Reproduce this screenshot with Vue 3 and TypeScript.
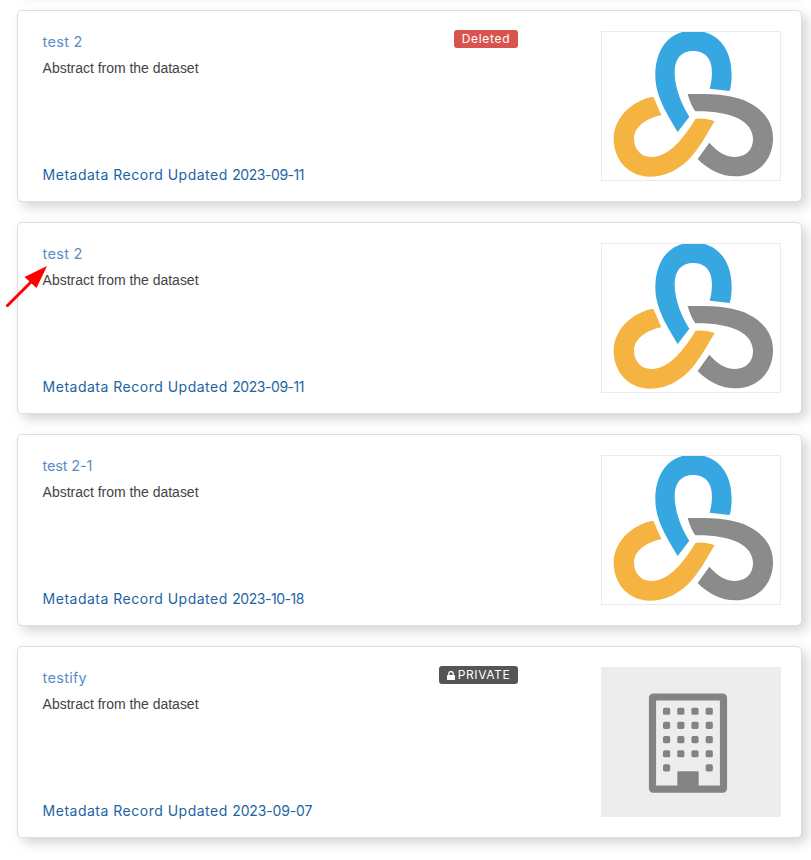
<script setup lang="ts">
interface Dataset {
  id: number
  title: string
  abstract: string
  updated: string
  status?: 'deleted' | 'private'
  image: 'logo' | 'building'
  pointed?: boolean
}

const abstract = 'Abstract from the dataset'

const datasets: Dataset[] = [
  { id: 1, title: 'test 2', abstract, updated: '2023-09-11', status: 'deleted', image: 'logo' },
  { id: 2, title: 'test 2', abstract, updated: '2023-09-11', image: 'logo', pointed: true },
  { id: 3, title: 'test 2-1', abstract, updated: '2023-10-18', image: 'logo' },
  { id: 4, title: 'testify', abstract, updated: '2023-09-07', status: 'private', image: 'building' },
]

const windows = [143, 185.5, 228, 270.5, 313].flatMap((y, row) =>
  [189, 231.7, 274.3, 317]
    .filter((_, col) => row < 4 || col === 0 || col === 3)
    .map((x) => ({ x, y })),
)

// Text holding the digit 1 is set tighter, as the digit is narrow.
const hasNarrowDigit = (text: string): boolean => text.includes('1')
</script>

<template>
  <main class="list">
    <article v-for="d in datasets" :key="d.id" class="card">
      <div class="info">
        <div class="heading">
          <a class="title" :class="{ narrow: hasNarrowDigit(d.title) }">{{ d.title }}</a>
          <span v-if="d.status === 'deleted'" class="badge deleted">Deleted</span>
          <span v-else-if="d.status === 'private'" class="badge private">
            <svg class="lock" viewBox="0 0 8 9">
              <path d="M1.8 4V2.7a2.2 2.2 0 0 1 4.4 0V4" fill="none" stroke="#fff" stroke-width="1.3" />
              <rect x="0" y="3.9" width="8" height="5.1" rx="0.6" fill="#fff" />
            </svg>
            <span>PRIVATE</span>
          </span>
        </div>
        <p class="abstract">{{ d.abstract }}</p>
        <p class="updated">
          Metadata Record Updated
          <time :class="{ narrow: hasNarrowDigit(d.updated) }">{{ d.updated }}</time>
        </p>
      </div>

      <div class="thumb" :class="d.image">
        <svg v-if="d.image === 'logo'" viewBox="3 18 540 450">
          <path
            fill="#36a7e0"
            d="M233 321C205 273 165 215 166 150C167 70 208 17 280 17C352 17 395 70 395 150C395 168 393 185 389 198L329 191C335 170 337 150 335 130C332 95 310 78 280 78C245 78 223 100 224 145C225 190 245 240 268 275Z"
          />
          <path
            fill="#8b8b8b"
            d="M263 207H310C380 208 427 218 461 241C501 267 520 301 519 342C518 405 475 453 405 454C365 454 325 435 293 402L328 353C350 378 375 396 405 396C440 396 460 372 459 340C456 290 400 258 286 259Q272 240 263 207Z"
          />
          <path
            fill="#f5b342"
            d="M160 215L184 271C140 280 101 305 102 343C103 375 125 396 152 396C195 396 235 365 287 281Q315 279 344 288C300 365 280 392 255 414C220 442 190 455 150 455C85 455 42 405 41 343C41 275 100 225 160 215Z"
          />
        </svg>
        <svg v-else viewBox="3 21 540 450">
          <rect x="157.5" y="111" width="213" height="276.5" rx="2" fill="none" stroke="#838383" stroke-width="21.5" stroke-linejoin="round" />
          <path d="M232 388V338q0-4 4-4h56q4 0 4 4v50z" fill="#838383" />
          <rect v-for="w in windows" :key="`${w.x}-${w.y}`" :x="w.x" :y="w.y" width="21.5" height="21.5" rx="5" fill="#838383" />
        </svg>
      </div>

      <svg v-if="d.pointed" class="arrow" viewBox="0 0 42 42">
        <path d="M1.5 39.5L28 13" stroke="#f00" stroke-width="3" stroke-linecap="round" />
        <path d="M41 0L18.5 11L30.5 22Z" fill="#f00" />
      </svg>
    </article>
  </main>
</template>

<style>
body {
  background: #fff;
  overflow: hidden;
}
</style>

<style scoped>
.list {
  box-sizing: border-box;
  height: 860px;
  padding: 0 9px 0 17px;
  display: flow-root;
  overflow: hidden;
}

.list::before {
  content: '';
  display: block;
  height: 100px;
  margin: -110px 0 20px;
  border-radius: 5px;
  box-shadow: 5px 5px 12px rgba(0, 0, 0, 0.17);
}

.card {
  position: relative;
  box-sizing: border-box;
  display: flex;
  justify-content: space-between;
  height: 192px;
  margin-bottom: 20px;
  padding: 20px 20px 20px 24.6px;
  border: 1px solid #dedede;
  border-radius: 5px;
  background: #fff;
  box-shadow: 5px 5px 12px rgba(0, 0, 0, 0.17);
}

.info {
  display: flex;
  flex-direction: column;
  width: 475.4px;
}

.heading {
  display: flex;
  justify-content: space-between;
  align-items: flex-start;
  height: 27px;
}

.title,
.updated,
.badge {
  font-family: Inter, 'Open Sans', sans-serif;
  white-space: nowrap;
}

.title {
  margin-top: 1px;
  font-size: 14.5px;
  line-height: 20px;
  letter-spacing: 0.28px;
  color: #5b8cc5;
}

.title.narrow {
  letter-spacing: -0.15px;
}

.abstract {
  margin: 0;
  font: 14px/20px 'Liberation Sans', Arial, sans-serif;
  letter-spacing: -0.02px;
  color: #444;
}

.updated {
  margin: auto 0 -4px;
  font-size: 14px;
  line-height: 20px;
  letter-spacing: 0.5px;
  color: #1d64a3;
}

.updated time {
  letter-spacing: -0.15px;
}

.updated time.narrow {
  letter-spacing: -0.45px;
}

.badge {
  box-sizing: border-box;
  display: flex;
  align-items: center;
  justify-content: center;
  height: 18px;
  margin-top: -1px;
  border-radius: 3px;
  font-size: 12px;
  line-height: 18px;
  color: #fff;
}

.deleted {
  width: 64px;
  background: #d9534f;
  letter-spacing: 0.7px;
}

.private {
  width: 79px;
  gap: 3px;
  background: #555;
  letter-spacing: 0.6px;
}

.lock {
  width: 8px;
  height: 9px;
}

.thumb {
  box-sizing: border-box;
  width: 180px;
  height: 150px;
}

.thumb svg {
  display: block;
  width: 180px;
  height: 150px;
}

.thumb.logo {
  border: 1px solid #ececec;
  overflow: hidden;
}

.thumb.logo svg {
  margin: -1px;
}

.thumb.building {
  background: #ededed;
}

.arrow {
  position: absolute;
  left: -12px;
  top: 43px;
  width: 42px;
  height: 42px;
}
</style>
